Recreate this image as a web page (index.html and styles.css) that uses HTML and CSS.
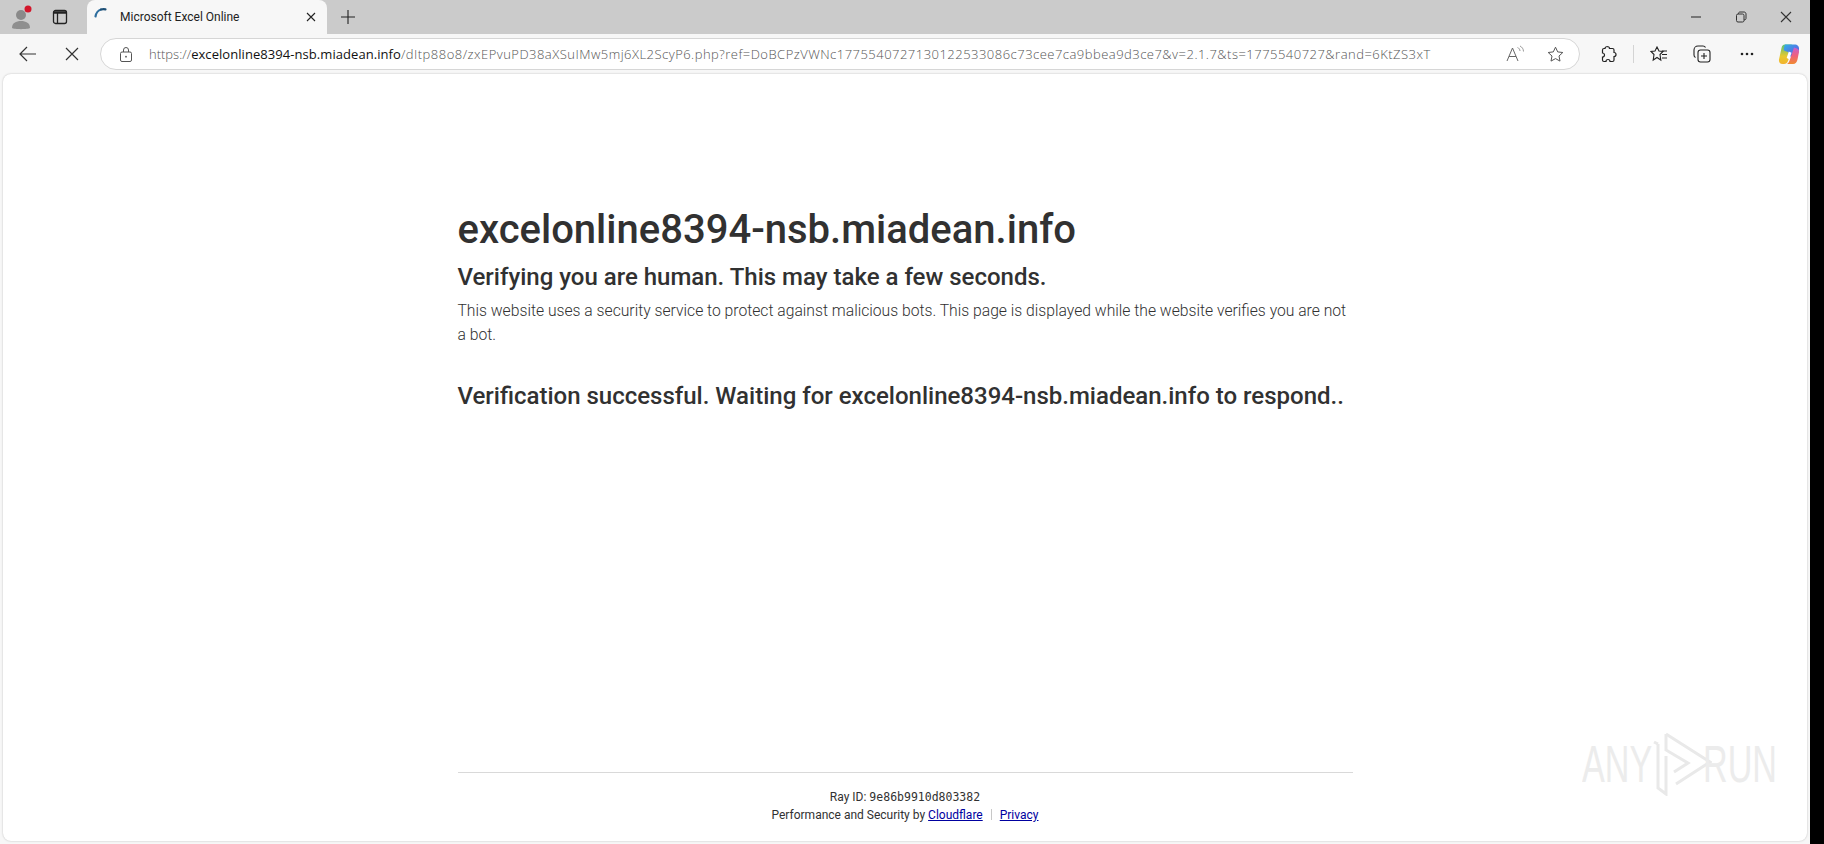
FILE: index.html
```html
<!DOCTYPE html>
<html lang="en">
<head>
    <meta charset="UTF-8">
    <meta name="viewport" content="width=device-width, initial-scale=1.0">
    <title>Microsoft Excel Online</title>
    <link rel="stylesheet" href="styles.css">
</head>
<body>
    <div class="window">
        <div class="tabstrip">
            <div class="profile">
                <svg width="24" height="26" viewBox="0 0 24 26"><circle cx="10" cy="11" r="5" fill="#8a8a8a"/><path d="M1 24c0-5 4-7 9-7s9 2 9 7c-2 1.500-16 1.500-18 0z" fill="#8f8f8f"/><circle cx="17" cy="5" r="3.500" fill="#d3162b"/></svg>
            </div>
            <button class="strip-btn">
                <svg width="16" height="16" viewBox="0 0 16 16" fill="none" stroke="#222" stroke-width="1.300"><rect x="1.500" y="1.500" width="13" height="13" rx="2"/><path d="M5.500 4v10.500"/><path d="M1.500 3.500h13" stroke-width="2.500"/></svg>
            </button>
            <div class="tab">
                <svg class="spinner" width="14" height="14" viewBox="0 0 14 14" fill="none" stroke-width="2.200" stroke-linecap="round"><path d="M1.500 9.500C2 6 4.500 3 7 2.500" stroke="#2f6f9f"/><path d="M7 2.500c1.500-.5 3-.5 4.500-.2" stroke="#1d4f76"/></svg>
                <span class="tab-title">Microsoft Excel Online</span>
                <svg class="tab-close" width="10" height="10" viewBox="0 0 10 10" stroke="#222" stroke-width="1.100"><path d="M1 1l8 8M9 1l-8 8"/></svg>
            </div>
            <button class="new-tab">
                <svg width="16" height="16" viewBox="0 0 16 16" stroke="#222" stroke-width="1.100"><path d="M8 1v14M1 8h14"/></svg>
            </button>
            <div class="window-controls">
                <svg width="12" height="12" viewBox="0 0 12 12" stroke="#333" stroke-width="1.100"><path d="M1 6h10"/></svg>
                <svg width="12" height="12" viewBox="0 0 12 12" fill="none" stroke="#333"><rect x="1.500" y="3" width="7.500" height="8" rx="1.500"/><path d="M3.500 3V2.500c0-.8.500-1.500 1.500-1.500h4c1.200 0 2 .8 2 2v4.500c0 .8-.5 1.300-2 1.500"/></svg>
                <svg width="12" height="12" viewBox="0 0 12 12" stroke="#333" stroke-width="1.100"><path d="M1 1l10 10M11 1L1 11"/></svg>
            </div>
        </div>
        <div class="toolbar">
            <button class="nav-btn">
                <svg width="18" height="16" viewBox="0 0 18 16" fill="none" stroke="#333" stroke-width="1.200"><path d="M1 8h16M8 1L1 8l7 7"/></svg>
            </button>
            <button class="nav-btn">
                <svg width="14" height="14" viewBox="0 0 14 14" stroke="#333" stroke-width="1.200"><path d="M1 1l12 12M13 1L1 13"/></svg>
            </button>
            <div class="address">
                <svg class="lock" width="12" height="15" viewBox="0 0 12 15" fill="none" stroke="#555"><rect x=".5" y="5" width="11" height="9.500" rx="1.500"/><path d="M3.500 5V3a2.500 2.500 0 015 0v2"/><circle cx="6" cy="9.700" r=".9" fill="#555" stroke="none"/></svg>
                <span class="url"><span class="url-dim">https://</span><span class="url-host">excelonline8394-nsb.miadean.info</span><span class="url-path">/dItp88o8/zxEPvuPD38aXSuIMw5mj6XL2ScyP6.php?ref=DoBCPzVWNc1775540727130122533086c73cee7ca9bbea9d3ce7&amp;v=2.1.7&amp;ts=1775540727&amp;rand=6KtZS3xT</span></span>
                <div class="address-icons">
                    <svg width="20" height="18" viewBox="0 0 20 18" fill="none" stroke="#666"><path d="M1 16L6.500 3 12 16M3 11.500h7"/><path d="M11.500 2.500c1.500.5 2.500 2 2.500 3.500M14 1c2 1 3.500 3 3.500 5.500" stroke="#999"/></svg>
                    <svg width="17" height="17" viewBox="0 0 17 17" fill="none" stroke="#555"><path d="M8.500 1.200l2.200 4.700 5.100.6-3.800 3.500 1 5.100-4.500-2.500-4.500 2.500 1-5.100L1.200 6.500l5.100-.6z"/></svg>
                </div>
            </div>
            <div class="toolbar-icons">
                <svg class="ext" width="16" height="18" viewBox="0 0 16 18" fill="none" stroke="#222" stroke-width="1.200"><path d="M6 1.500c1.500 0 2.500 1 2.500 2h3c1 0 1.500.5 1.500 1.500v2.500c1.500 0 2 1 2 2s-.5 2-2 2V15c0 1-.5 1.500-1.500 1.500H9c0-1.500-1-2-2-2s-2 .5-2 2H3c-1 0-1.500-.5-1.500-1.500v-3c1.500 0 2-1 2-2s-1-2-2-2V5c0-1 .5-1.500 1.500-1.500h1c0-1 1-2 2.500-2z"/></svg>
                <span class="divider"></span>
                <svg class="fav" width="18" height="16" viewBox="0 0 18 16" fill="none" stroke="#222" stroke-width="1.100"><path d="M7 1l2 4 4 .5-3 3 .8 5.500L7 11.500 3.200 14 4 8.500l-3-3L5 5z"/><path d="M12 5h5M12 8.500h5M12 12h5"/></svg>
                <svg class="coll" width="18" height="18" viewBox="0 0 18 18" fill="none" stroke="#222" stroke-width="1.100"><rect x="5" y="5" width="12" height="12" rx="2.500"/><path d="M11 8v6M8 11h6"/><path d="M2.500 12.500C1.500 12 1 11 1 10V5c0-2 1.500-4 4-4h5c1 0 2 .5 2.500 1.500"/></svg>
                <svg class="dots" width="14" height="4" viewBox="0 0 14 4" fill="#222"><circle cx="2" cy="2" r="1.300"/><circle cx="7" cy="2" r="1.300"/><circle cx="12" cy="2" r="1.300"/></svg>
                <svg class="copilot" width="22" height="22" viewBox="0 0 22 22">
                    <defs>
                        <linearGradient id="cpA" x1="0" y1="0" x2="1" y2="1"><stop offset="0" stop-color="#2fb0e8"/><stop offset="1" stop-color="#6a4fe0"/></linearGradient>
                        <linearGradient id="cpB" x1="0" y1="0" x2="0" y2="1"><stop offset="0" stop-color="#55c07a"/><stop offset=".6" stop-color="#e8c92e"/><stop offset="1" stop-color="#f2b32e"/></linearGradient>
                        <linearGradient id="cpC" x1="0" y1="0" x2="0" y2="1"><stop offset="0" stop-color="#c65fd0"/><stop offset=".5" stop-color="#f0607a"/><stop offset="1" stop-color="#f08a30"/></linearGradient>
                    </defs>
                    <path d="M7 1.500h6c1.500 0 2 1 1.500 2.500L10 18c-.7 2-2 3-4 3H4.500C2 21 .6 19 1 16.500L3.500 5C4 3 5 1.500 7 1.500z" fill="url(#cpB)"/>
                    <path d="M7 1.500h9.500c3 0 5 2 4.500 5l-1 4.500c-.5 2-2 2.500-4 2.500h-4L10 9 7 8C5.500 7.500 5.500 6 6 4.500z" fill="url(#cpA)"/>
                    <path d="M13 13.500l3-9c1.500.5 5.500 1 5 4.500l-1.500 7.500c-.5 2.500-2 4.500-4.500 4.500H9c1.500-1 2.300-2.500 2.800-4z" fill="url(#cpC)"/>
                    <path d="M10.800 8.500l2.700 1.200-2.200 6.500-2.600-1.200z" fill="#fff"/>
                </svg>
            </div>
        </div>
        <div class="page">
            <main class="main-content">
                <h1>excelonline8394-nsb.miadean.info</h1>
                <h2>Verifying you are human. This may take a few seconds.</h2>
                <p class="lead">This website uses a security service to protect against malicious bots. This page is displayed while the website verifies you are not a bot.</p>
                <h2 class="status">Verification successful. Waiting for excelonline8394-nsb.miadean.info to respond..</h2>
            </main>
            <footer class="footer">
                <div class="footer-inner">
                    <div>Ray ID: <code>9e86b9910d803382</code></div>
                    <div>Performance and Security by <a href="#">Cloudflare</a><span class="sep"></span><a href="#">Privacy</a></div>
                </div>
            </footer>
            <div class="watermark">
                <span>ANY</span>
                <svg width="60" height="64" viewBox="0 0 60 64" fill="none" stroke="#e9e9e9" stroke-width="3"><path d="M6 12v44l8 6V24"/><path d="M14 2l44 28-34 22"/><path d="M14 2v16l22 13-14 9"/><path d="M2 10l4 2"/></svg>
                <span>RUN</span>
            </div>
        </div>
    </div>
</body>
</html>
```

FILE: styles.css
```css
* {
    box-sizing: border-box;
}
html, body {
    height: 100%;
}
body {
    margin: 0;
    background-color: black;
    overflow: hidden;
    font-family: Roboto, "Open Sans", Arial, sans-serif;
}
button {
    border: 0;
    padding: 0;
    background: none;
    display: flex;
    align-items: center;
    justify-content: center;
}
.window {
    width: 1810px;
    height: 844px;
    display: flex;
    flex-direction: column;
    background: #f7f7f7;
}

/* tab strip */
.tabstrip {
    height: 34px;
    flex: none;
    display: flex;
    align-items: center;
    background: #cbcbcb;
}
.profile {
    width: 44px;
    height: 34px;
    padding: 4px 0 0 11px;
}
.strip-btn {
    width: 32px;
    height: 34px;
}
.tab {
    width: 240px;
    height: 34px;
    margin-left: 11px;
    display: flex;
    align-items: center;
    padding: 0 11px 0 7px;
    background: #f7f7f7;
    border-radius: 8px 8px 0 0;
}
.spinner {
    margin: 0 12px 6px 0;
    flex: none;
}
.tab-title {
    flex: 1;
    font-size: 12px;
    color: #222;
}
.new-tab {
    width: 32px;
    height: 34px;
    margin-left: 5px;
}
.window-controls {
    margin-left: auto;
    display: flex;
    align-items: center;
    gap: 33px;
    padding-right: 18px;
}

/* toolbar */
.toolbar {
    height: 40px;
    flex: none;
    display: flex;
    align-items: center;
    padding-left: 6px;
    background: #f7f7f7;
}
.nav-btn {
    width: 44px;
    height: 32px;
}
.address {
    width: 1480px;
    height: 32px;
    margin-left: 6px;
    display: flex;
    align-items: center;
    padding: 0 15px 0 19px;
    background: white;
    border: 1px solid #d6d6d6;
    border-radius: 16px;
}
.lock {
    flex: none;
    margin-right: 17px;
}
.url {
    font-family: "Open Sans", sans-serif;
    font-size: 13px;
    white-space: nowrap;
    width: 1290px;
    font-weight: 300;
}
.url-dim, .url-path {
    color: #555;
}
.url-path {
    letter-spacing: 0.48px;
}
.url-host {
    color: #111;
    font-weight: 400;
    letter-spacing: 0.06px;
}
.address-icons {
    margin-left: auto;
    display: flex;
    align-items: center;
    gap: 21px;
}
.toolbar-icons {
    flex: 1;
    display: flex;
    align-items: center;
    padding-left: 21px;
}
.divider {
    width: 1px;
    height: 18px;
    margin: 0 16px;
    background: #d4d4d4;
}
.coll {
    margin-left: 25px;
}
.dots {
    margin-left: 29px;
}
.copilot {
    margin-left: 24px;
}

/* page */
.page {
    position: relative;
    width: 1804px;
    height: 767px;
    margin: 0 0 3px 3px;
    flex: none;
    display: flex;
    flex-direction: column;
    background: white;
    border-radius: 8px;
    box-shadow: 0 0 2px rgba(0, 0, 0, 0.25);
    color: #313131;
}
.main-content {
    width: 895px;
    margin: 0 auto;
    padding-top: 132px;
    flex: 1;
}
h1 {
    margin: 0;
    font-size: 40px;
    line-height: 48px;
    font-weight: 500;
}
h2 {
    margin: 5px 0 0;
    font-size: 24px;
    line-height: 36px;
    font-weight: 500;
}
.lead {
    margin: 4px 0 0;
    font-size: 15.7px;
    line-height: 24px;
    font-weight: 300;
}
h2.status {
    margin-top: 31px;
}
.footer {
    width: 895px;
    margin: 0 auto 17px;
    padding-top: 15px;
    border-top: 1px solid #d9d9d9;
    font-size: 12px;
    line-height: 18px;
    text-align: center;
}
code {
    font-family: "DejaVu Sans Mono", monospace;
    font-size: 11.5px;
}
.footer a {
    color: #0000a0;
}
.sep {
    display: inline-block;
    width: 1px;
    height: 11px;
    margin: 0 8px;
    background: #c8c8c8;
    vertical-align: -1px;
}
.watermark {
    position: absolute;
    left: 1579px;
    top: 658px;
    display: flex;
    align-items: center;
    font-size: 51px;
    color: #ececec;
    font-family: "Liberation Sans", sans-serif;
}
.watermark span {
    width: 70px;
    white-space: nowrap;
    transform: scaleX(0.67);
    transform-origin: left center;
}
.watermark svg {
    margin-right: -9px;
}
```
